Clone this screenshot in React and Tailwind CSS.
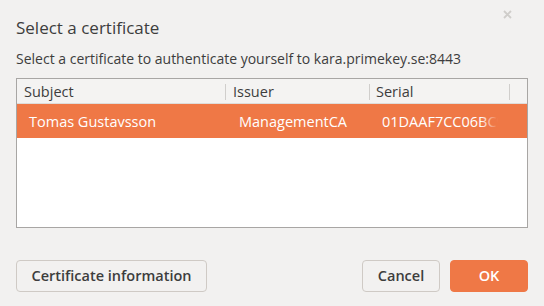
import React from "react";

export default function App() {
  const font = { fontFamily: '"Open Sans", "Noto Sans", sans-serif' };
  return (
    <div className="w-[544px] h-[306px] bg-[#f2f1f0] relative overflow-hidden" style={font}>
      <svg className="absolute left-[503px] top-[10px]" width="9" height="9" viewBox="0 0 9 9">
        <path d="M1 1L8 8M8 1L1 8" stroke="#cfcdca" strokeWidth="1.8" />
      </svg>
      <div className="flex flex-col px-4 pt-[16px]">
        <div className="text-[17px] leading-[24px] text-[#3d3d3d]">Select a certificate</div>
        <div className="mt-[10px] text-[14px] leading-[18px] text-[#3d3d3d]">
          Select a certificate to authenticate yourself to kara.primekey.se:8443
        </div>
        <div className="mt-[10px] w-[512px] h-[150px] border border-[#a8a6a4] bg-white flex flex-col">
          <div className="h-[25px] pt-[2px] bg-[#f4f3f2] border-b border-[#dedcda] flex items-center text-[14.5px] text-[#3d3d3d]">
            <div className="w-[209px] pl-[7px] border-r border-[#d0cecc] h-[16px] flex items-center">Subject</div>
            <div className="w-[144px] pl-[7px] border-r border-[#d0cecc] h-[16px] flex items-center">Issuer</div>
            <div className="w-[140px] pl-[6px] border-r border-[#d0cecc] h-[16px] flex items-center">Serial</div>
          </div>
          <div className="h-[34px] pt-[1px] bg-[#ef7846] flex items-center text-[14.5px] text-white">
            <div className="w-[209px] pl-[12px]">Tomas Gustavsson</div>
            <div className="w-[144px] pl-[13px]">ManagementCA</div>
            <div className="w-[128px] pl-[12px] relative overflow-hidden whitespace-nowrap">
              01DAAF7CC06BC9E
              <div className="absolute right-0 top-0 bottom-0 w-[18px] bg-gradient-to-r from-[#ef784600] to-[#ef7846]" />
            </div>
          </div>
        </div>
        <div className="mt-[32px] flex items-center">
          <button className="w-[191px] h-[32px] rounded-[4px] border border-[#cfcac5] bg-[#f2f1f0] text-[14.5px] font-semibold text-[#3d3d3d]">
            Certificate information
          </button>
          <div className="flex-1" />
          <button className="w-[78px] h-[32px] rounded-[4px] border border-[#cfcac5] bg-[#f2f1f0] text-[14.5px] font-semibold text-[#3d3d3d]">
            Cancel
          </button>
          <button className="ml-[10px] w-[78px] h-[32px] rounded-[4px] border border-[#ef7846] bg-[#ef7846] text-[14.5px] font-semibold text-white">
            OK
          </button>
        </div>
      </div>
    </div>
  );
}
